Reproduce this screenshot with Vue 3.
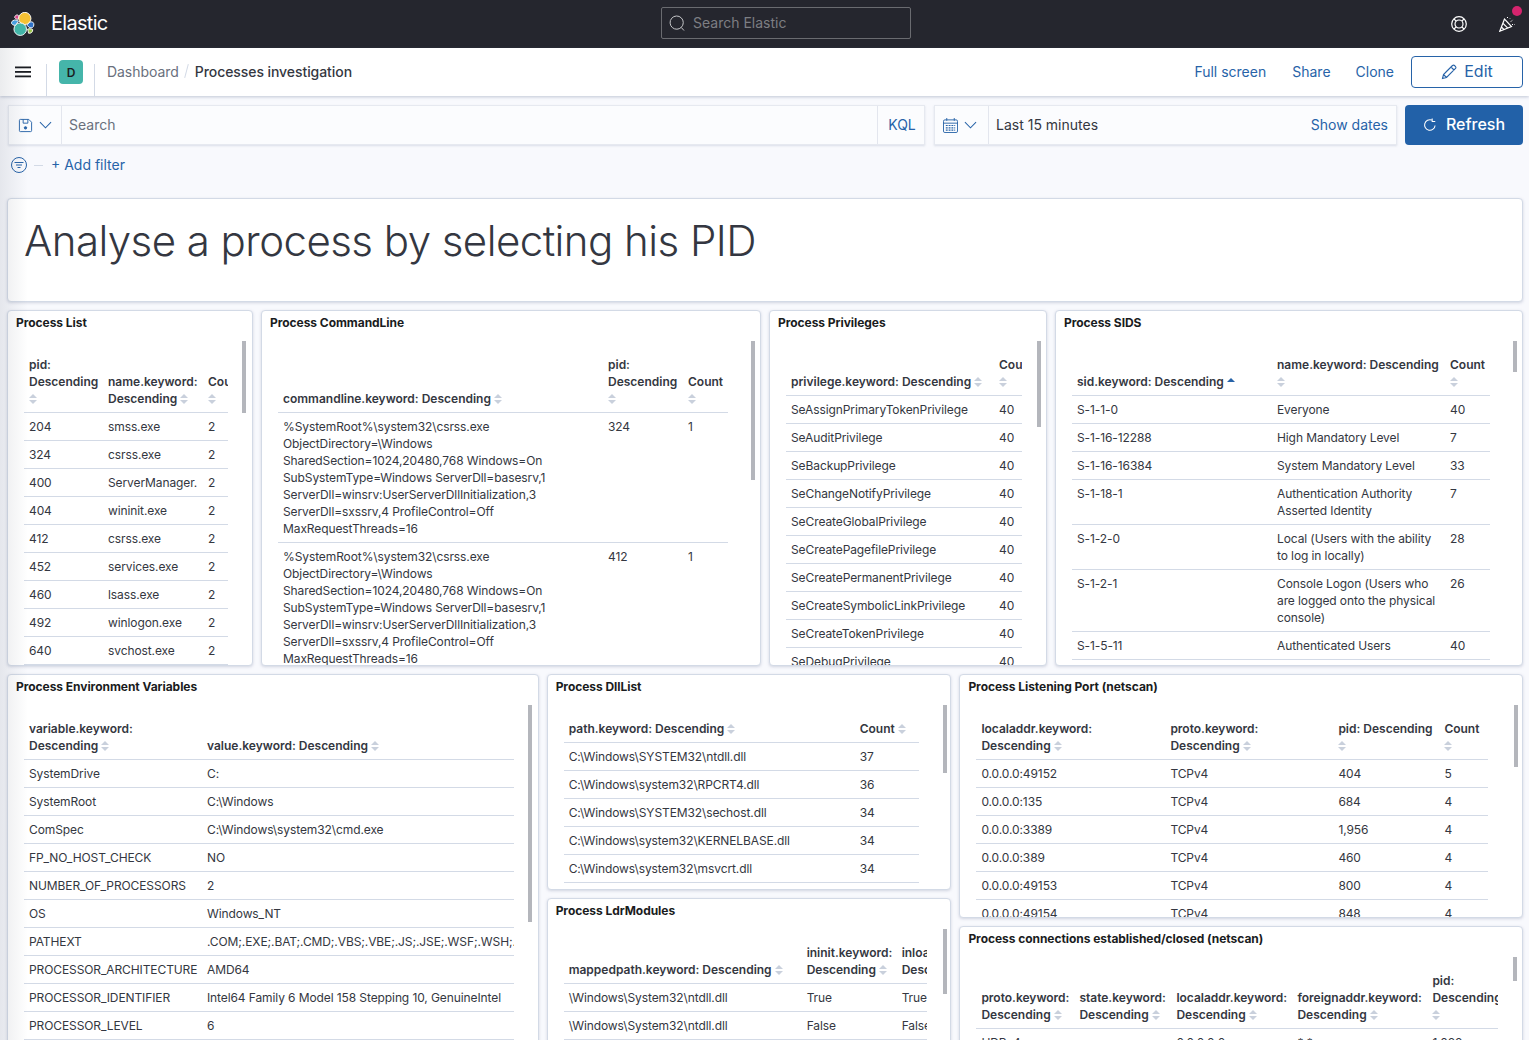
<script setup>
import { ref } from 'vue'

const cmd = '%SystemRoot%\\system32\\csrss.exe\nObjectDirectory=\\Windows\nSharedSection=1024,20480,768 Windows=On\nSubSystemType=Windows ServerDll=basesrv,1\nServerDll=winsrv:UserServerDllInitialization,3\nServerDll=sxssrv,4 ProfileControl=Off\nMaxRequestThreads=16'

const row1 = ref([
  {
    title: 'Process List', width: 246, height: 356, tableWidth: 204, bar: [234, 72],
    cols: [{ w: 79, label: 'pid: Descending' }, { w: 100, label: 'name.keyword: Descending' }, { w: 45, label: 'Count' }],
    rows: [['204', 'smss.exe', '2'], ['324', 'csrss.exe', '2'], ['400', 'ServerManager.', '2'], ['404', 'wininit.exe', '2'], ['412', 'csrss.exe', '2'], ['452', 'services.exe', '2'], ['460', 'lsass.exe', '2'], ['492', 'winlogon.exe', '2'], ['640', 'svchost.exe', '2']]
  },
  {
    title: 'Process CommandLine', width: 500, height: 356, tableWidth: 450, bar: [489, 139],
    cols: [{ w: 325, label: 'commandline.keyword: Descending' }, { w: 80, label: 'pid: Descending' }, { w: 45, label: 'Count' }],
    rows: [[cmd, '324', '1'], [cmd, '412', '1']]
  },
  {
    title: 'Process Privileges', width: 278, height: 356, tableWidth: 236, bar: [267, 86],
    cols: [{ w: 208, label: 'privilege.keyword: Descending' }, { w: 45, label: 'Count' }],
    rows: [['SeAssignPrimaryTokenPrivilege', '40'], ['SeAuditPrivilege', '40'], ['SeBackupPrivilege', '40'], ['SeChangeNotifyPrivilege', '40'], ['SeCreateGlobalPrivilege', '40'], ['SeCreatePagefilePrivilege', '40'], ['SeCreatePermanentPrivilege', '40'], ['SeCreateSymbolicLinkPrivilege', '40'], ['SeCreateTokenPrivilege', '40'], ['SeDebugPrivilege', '40']]
  },
  {
    title: 'Process SIDS', width: 468, height: 356, tableWidth: 418, bar: [457, 31],
    cols: [{ w: 200, label: 'sid.keyword: Descending', active: true }, { w: 173, label: 'name.keyword: Descending' }, { w: 45, label: 'Count' }],
    rows: [['S-1-1-0', 'Everyone', '40'], ['S-1-16-12288', 'High Mandatory Level', '7'], ['S-1-16-16384', 'System Mandatory Level', '33'], ['S-1-18-1', 'Authentication Authority Asserted Identity', '7'], ['S-1-2-0', 'Local (Users with the ability to log in locally)', '28'], ['S-1-2-1', 'Console Logon (Users who are logged onto the physical console)', '26'], ['S-1-5-11', 'Authenticated Users', '40']]
  }
])

const row2 = ref([
  {
    width: 532,
    panels: [{
      title: 'Process Environment Variables', height: 380, tableWidth: 490, bar: [520, 217], nowrap: true,
      cols: [{ w: 178, label: 'variable.keyword: Descending' }, { w: 312, label: 'value.keyword: Descending' }],
      rows: [['SystemDrive', 'C:'], ['SystemRoot', 'C:\\Windows'], ['ComSpec', 'C:\\Windows\\system32\\cmd.exe'], ['FP_NO_HOST_CHECK', 'NO'], ['NUMBER_OF_PROCESSORS', '2'], ['OS', 'Windows_NT'], ['PATHEXT', '.COM;.EXE;.BAT;.CMD;.VBS;.VBE;.JS;.JSE;.WSF;.WSH;.MSC'], ['PROCESSOR_ARCHITECTURE', 'AMD64'], ['PROCESSOR_IDENTIFIER', 'Intel64 Family 6 Model 158 Stepping 10, GenuineIntel'], ['PROCESSOR_LEVEL', '6']]
    }]
  },
  {
    width: 405,
    panels: [
      {
        title: 'Process DllList', height: 216, tableWidth: 355, bar: [395, 68],
        cols: [{ w: 291, label: 'path.keyword: Descending' }, { w: 64, label: 'Count' }],
        rows: [['C:\\Windows\\SYSTEM32\\ntdll.dll', '37'], ['C:\\Windows\\system32\\RPCRT4.dll', '36'], ['C:\\Windows\\SYSTEM32\\sechost.dll', '34'], ['C:\\Windows\\system32\\KERNELBASE.dll', '34'], ['C:\\Windows\\system32\\msvcrt.dll', '34']]
      },
      {
        title: 'Process LdrModules', height: 160, tableWidth: 363, bar: [395, 65],
        cols: [{ w: 238, label: 'mappedpath.keyword: Descending' }, { w: 95, label: 'ininit.keyword: Descending' }, { w: 95, label: 'inload.keyword: Descending' }],
        rows: [['\\Windows\\System32\\ntdll.dll', 'True', 'True'], ['\\Windows\\System32\\ntdll.dll', 'False', 'False']]
      }
    ]
  },
  {
    width: 564,
    panels: [
      {
        title: 'Process Listening Port (netscan)', height: 244, tableWidth: 512, bar: [554, 62],
        cols: [{ w: 189, label: 'localaddr.keyword: Descending' }, { w: 168, label: 'proto.keyword: Descending' }, { w: 106, label: 'pid: Descending' }, { w: 49, label: 'Count' }],
        rows: [['0.0.0.0:49152', 'TCPv4', '404', '5'], ['0.0.0.0:135', 'TCPv4', '684', '4'], ['0.0.0.0:3389', 'TCPv4', '1,956', '4'], ['0.0.0.0:389', 'TCPv4', '460', '4'], ['0.0.0.0:49153', 'TCPv4', '800', '4'], ['0.0.0.0:49154', 'TCPv4', '848', '4']]
      },
      {
        title: 'Process connections established/closed (netscan)', height: 130, tableWidth: 522, bar: [553, 24],
        cols: [{ w: 98, label: 'proto.keyword: Descending' }, { w: 97, label: 'state.keyword: Descending' }, { w: 121, label: 'localaddr.keyword: Descending' }, { w: 135, label: 'foreignaddr.keyword: Descending' }, { w: 80, label: 'pid: Descending' }],
        rows: [['UDPv4', '', '0.0.0.0:0', '*:*', '1,088']]
      }
    ]
  }
])
</script>

<template>
  <div class="page">
    <header class="topbar">
      <div class="brand">
        <svg class="logo" viewBox="0 0 26 26" width="24" height="24">
          <path d="M2 9.500c2-1.500 4.500-1 6 .5-1 1.500-2.500 3-3 4.500-2.500 0-4.500-1-4.500-2.800 0-1 .6-1.700 1.500-2.200z" fill="#4a9fe0" stroke="#fff" stroke-width="1" />
          <path d="M4 6c0-1.700 1.500-3 3-2.800 1 .2 1.500 1 1.500 2 0 1-.3 1.800-.7 2.600C6.500 8 5 7.500 4 6z" fill="#d8488c" stroke="#fff" stroke-width="1" />
          <path d="M17.500 14.500c1-3 4-4.500 6-3.500 2 1.200 1.500 5-.5 6-1.500.7-3.500 0-5.500-2.500z" fill="#2f72c9" stroke="#fff" stroke-width="1" />
          <path d="M18 18.500c1.500-.5 4-.4 5.500.5.200 2.500-1.500 4.500-4.500 4-.2-1.500-.5-3-1-4.500z" fill="#9bc44c" stroke="#fff" stroke-width="1" />
          <circle cx="15" cy="7" r="6.600" fill="#f6c133" stroke="#fff" stroke-width="1" />
          <circle cx="10" cy="18.600" r="6.800" fill="#43b5a8" stroke="#fff" stroke-width="1" />
        </svg>
        <span class="brand-name">Elastic</span>
      </div>
      <div class="global-search">
        <svg viewBox="0 0 16 16" width="16" height="16" fill="none" stroke="#c5c6c9" stroke-width="1">
          <path d="M12.200 12.400A6.600 6.600 0 1 0 3.500 12.700a6.600 6.600 0 0 0 8.700-.3l2.800 3.100" />
        </svg>
        <span class="lift">Search Elastic</span>
      </div>
      <div class="top-icons">
        <svg viewBox="0 0 16 16" width="16" height="16" fill="none" stroke="#fff" stroke-width="1.200">
          <circle cx="8" cy="8" r="7.300" />
          <circle cx="8" cy="8" r="4" />
          <path d="M3 3l2.200 2.200M13 3l-2.200 2.200M3 13l2.200-2.200M13 13l-2.200-2.200" />
        </svg>
        <span class="party">
          <svg viewBox="0 0 16 16" width="16" height="16" fill="none" stroke="#fff" stroke-width="1.200">
            <path d="M5.500 3L.8 15.200 12.500 10.500zM3.800 7.200l5 5M2.400 11l2.700 2.700" />
            <path d="M8.500 1v2M11.500 6l2.500-2.500M13 8.500h2.500M11 2.500l.5-.5" stroke-dasharray="1 1" stroke-width="1" />
          </svg>
          <i class="dot"></i>
        </span>
      </div>
    </header>

    <nav class="subnav">
      <div class="menu-btn">
        <svg viewBox="0 0 16 12" width="16" height="12" fill="#1a1c21">
          <rect y="0.500" width="16" height="1.800" /><rect y="5" width="16" height="1.800" /><rect y="9.500" width="16" height="1.800" />
        </svg>
      </div>
      <div class="avatar-cell"><span class="avatar">D</span></div>
      <div class="crumbs lift">
        <span class="crumb">Dashboard</span><span class="slash"></span><span class="crumb current">Processes investigation</span>
      </div>
      <div class="actions">
        <a class="lift">Full screen</a>
        <a class="lift">Share</a>
        <a class="lift">Clone</a>
        <button class="edit">
          <svg viewBox="0 0 16 16" width="16" height="16" fill="none" stroke="#2763a8" stroke-width="1.100">
            <path d="M1.500 14.500l1-4L11.500 1.500c.8-.6 1.500-.5 2 0l1 1c.5.6.6 1.300 0 2l-9 9zM2.500 10.500l3 3M10 3l3 3M4 9l7.500-7.500" />
          </svg>
          <span class="lift">Edit</span>
        </button>
      </div>
    </nav>

    <div class="querybar">
      <div class="box query-box">
        <div class="box-btn save-btn">
          <svg viewBox="0 0 16 16" width="15" height="15" fill="none" stroke="#2763a8" stroke-width="1">
            <path d="M2.500 1.500h9l3 3v9a1 1 0 0 1-1 1h-11a1 1 0 0 1-1-1v-11a1 1 0 0 1 1-1zM5.500 1.500v4h5v-4" />
            <circle cx="8" cy="10.500" r="1.300" fill="#2763a8" />
          </svg>
          <svg viewBox="0 0 14 8" width="13" height="8" fill="none" stroke="#2763a8" stroke-width="1.100"><path d="M1 1l6 6 6-6" /></svg>
        </div>
        <div class="box-text search-text lift">Search</div>
        <div class="kql lift">KQL</div>
      </div>
      <div class="box date-box">
        <div class="box-btn cal-btn">
          <svg viewBox="0 0 16 16" width="15" height="15" fill="none" stroke="#2763a8" stroke-width="1">
            <rect x="0.500" y="2" width="15" height="13.500" rx="1.500" />
            <path d="M4 0v3M12 0v3M.5 5.500h15" />
            <path d="M3 8h10M3 10.500h10M3 13h10" stroke-dasharray="2 1" stroke-width="1.300" />
          </svg>
          <svg viewBox="0 0 14 8" width="13" height="8" fill="none" stroke="#2763a8" stroke-width="1.100"><path d="M1 1l6 6 6-6" /></svg>
        </div>
        <div class="box-text date-text lift">Last 15 minutes</div>
        <a class="show-dates lift">Show dates</a>
      </div>
      <button class="refresh">
        <svg viewBox="0 0 16 16" width="14" height="14" fill="none" stroke="#fff" stroke-width="1.200">
          <path d="M13.800 8.500A6 6 0 1 1 10 2.400M10.500 .5v3.500H14" />
        </svg>
        <span class="lift">Refresh</span>
      </button>
    </div>

    <div class="filterbar">
      <svg viewBox="0 0 16 16" width="16" height="16" fill="none" stroke="#2763a8" stroke-width="1">
        <circle cx="8" cy="8" r="7.500" />
        <path d="M3.500 5.500h9M5 8h6M6.500 10.500h3" />
      </svg>
      <span class="dash"></span>
      <a class="add-filter lift">+ Add filter</a>
    </div>

    <main class="dashboard">
      <section class="card heading-card">
        <h1>Analyse a process by selecting his PID</h1>
      </section>

      <div class="row">
        <section v-for="p in row1" :key="p.title" class="card panel" :style="{ width: p.width + 'px', height: p.height + 'px' }">
          <h2>{{ p.title }}</h2>
          <span class="scrollbar" :style="{ left: p.bar[0] + 'px', height: p.bar[1] + 'px' }"></span>
          <div class="table-wrap" :style="{ width: p.tableWidth + 'px' }">
            <table :style="{ width: p.cols.reduce((s, c) => s + c.w, 0) + 'px' }">
              <colgroup><col v-for="c in p.cols" :key="c.label" :style="{ width: c.w + 'px' }"></colgroup>
              <thead>
                <tr>
                  <th v-for="c in p.cols" :key="c.label">{{ c.label }} <svg class="sort" viewBox="0 0 8 10" width="8" height="10"><path v-if="c.active" d="M0 5l4-4 4 4z" fill="#2763a8" /><path v-else d="M0 4l4-4 4 4zM0 6l4 4 4-4z" fill="#c9d0dc" /></svg></th>
                </tr>
              </thead>
              <tbody>
                <tr v-for="(r, i) in p.rows" :key="i">
                  <td v-for="(v, j) in r" :key="j">{{ v }}</td>
                </tr>
              </tbody>
            </table>
          </div>
        </section>
      </div>

      <div class="row">
        <div v-for="col in row2" :key="col.width" class="stack" :style="{ width: col.width + 'px' }">
          <section v-for="p in col.panels" :key="p.title" class="card panel" :style="{ height: p.height + 'px' }">
            <h2>{{ p.title }}</h2>
            <span class="scrollbar" :style="{ left: p.bar[0] + 'px', height: p.bar[1] + 'px' }"></span>
            <div class="table-wrap" :style="{ width: p.tableWidth + 'px' }">
              <table :class="{ nowrap: p.nowrap }" :style="{ width: p.cols.reduce((s, c) => s + c.w, 0) + 'px' }">
                <colgroup><col v-for="c in p.cols" :key="c.label" :style="{ width: c.w + 'px' }"></colgroup>
                <thead>
                  <tr>
                    <th v-for="c in p.cols" :key="c.label">{{ c.label }} <svg class="sort" viewBox="0 0 8 10" width="8" height="10"><path d="M0 4l4-4 4 4zM0 6l4 4 4-4z" fill="#c9d0dc" /></svg></th>
                  </tr>
                </thead>
                <tbody>
                  <tr v-for="(r, i) in p.rows" :key="i">
                    <td v-for="(v, j) in r" :key="j">{{ v }}</td>
                  </tr>
                </tbody>
              </table>
            </div>
          </section>
        </div>
      </div>
    </main>

    <div class="edge-shade"></div>
  </div>
</template>

<style>
html, body { margin: 0; overflow: hidden; background: #f8f9fd; }
</style>

<style scoped>
.page {
  position: relative;
  height: 1040px;
  overflow: hidden;
  background: #f8f9fd;
  font-family: Inter, "Liberation Sans", sans-serif;
  color: #343741;
  font-size: 14px;
}
.lift { padding-bottom: 2px; }

.topbar {
  height: 48px;
  background: #25262e;
  display: flex;
  align-items: center;
  position: relative;
}
.brand { display: flex; align-items: center; padding-left: 11px; }
.brand-name {
  color: #fff;
  font-size: 20px;
  margin: 0 0 2px 16px;
  letter-spacing: -0.7px;
}
.global-search {
  position: absolute;
  left: 661px;
  top: 7px;
  width: 250px;
  height: 32px;
  box-sizing: border-box;
  border: 1px solid #6a6b70;
  border-radius: 2px;
  display: flex;
  align-items: center;
  padding-left: 7px;
  gap: 8px;
  color: #7d7e83;
}
.top-icons { margin-left: auto; display: flex; align-items: center; gap: 32px; padding-right: 14px; }
.party { position: relative; display: block; height: 16px; }
.dot {
  position: absolute;
  right: -7px;
  top: -10px;
  width: 10px;
  height: 10px;
  border-radius: 50%;
  background: #d6246e;
}

.subnav {
  height: 48px;
  background: #fff;
  display: flex;
  box-shadow: 0 1px 3px rgba(90, 105, 140, 0.35);
  position: relative;
}
.menu-btn { width: 46px; display: flex; align-items: center; justify-content: center; }
.avatar-cell {
  width: 47px;
  margin-top: 16px;
  border-left: 1px solid #d3dae6;
  border-right: 1px solid #d3dae6;
  position: relative;
}
.avatar {
  position: absolute;
  left: 12px;
  top: -4px;
  width: 24px;
  height: 24px;
  border-radius: 4px;
  background: #45b5aa;
  color: #1a1c21;
  font-size: 12px;
  font-weight: 600;
  display: flex;
  align-items: center;
  justify-content: center;
}
.crumbs { display: flex; align-items: center; margin-left: 12px; }
.crumb { color: #69707d; letter-spacing: -0.05px; }
.crumb.current { color: #343741; font-weight: 500; letter-spacing: -0.07px; }
.slash {
  width: 1px;
  height: 14px;
  margin: 0 8px 0 7px;
  background: #d3dae6;
  transform: rotate(15deg);
}
.actions { margin-left: auto; display: flex; align-items: center; padding-right: 6px; }
.actions a { color: #2763a8; margin-right: 25px; }
.actions a:first-child { margin-right: 26px; }
.edit {
  width: 112px;
  height: 32px;
  margin-left: -8px;
  background: #fff;
  border: 1px solid #2763a8;
  border-radius: 4px;
  color: #2763a8;
  font: 16px Inter, sans-serif;
  display: flex;
  align-items: center;
  justify-content: center;
  gap: 7px;
}

.querybar { display: flex; padding: 9px 6px 0 8px; height: 40px; }
.box {
  background: #fbfcfe;
  border: 1px solid #e6e9f0;
  box-shadow: 0 1px 2px rgba(90, 105, 140, 0.18);
  box-sizing: border-box;
  display: flex;
  align-items: center;
  height: 40px;
  flex: none;
}
.query-box { width: 917px; }
.date-box { width: 463px; margin-left: 9px; }
.box-btn {
  height: 100%;
  display: flex;
  align-items: center;
  gap: 6px;
  border-right: 1px solid #e3e6ee;
  box-sizing: border-box;
  padding-left: 9px;
}
.save-btn { width: 53px; }
.cal-btn { width: 54px; padding-left: 8px; }
.box-text { padding-left: 7px; flex: 1; }
.search-text { color: #69707d; }
.date-text { color: #343741; }
.kql {
  height: 100%;
  width: 47px;
  box-sizing: border-box;
  border-left: 1px solid #e3e6ee;
  padding-left: 2px;
  color: #2763a8;
  display: flex;
  align-items: center;
  justify-content: center;
}
.show-dates { color: #2763a8; padding-right: 8px; }
.refresh {
  width: 118px;
  height: 40px;
  margin-left: 8px;
  flex: none;
  background: #2261a8;
  border: 0;
  border-radius: 4px;
  color: #fff;
  font: 500 16px Inter, sans-serif;
  display: flex;
  align-items: center;
  justify-content: center;
  gap: 9px;
}

.filterbar { display: flex; align-items: center; height: 24px; margin-top: 8px; padding-left: 11px; }
.dash { width: 9px; height: 1px; background: #d3dae6; margin: 0 8px 0 7px; }
.add-filter { color: #2763a8; }

.dashboard { padding: 21px 6px 0 7px; display: flex; flex-direction: column; gap: 8px; }
.row { display: flex; gap: 8px; }
.stack { display: flex; flex-direction: column; gap: 8px; }

.card {
  background: #fff;
  border: 1px solid #d3dae6;
  border-radius: 4px;
  box-sizing: border-box;
  box-shadow: 0 1px 3px rgba(90, 105, 140, 0.25);
}
.heading-card { height: 104px; padding: 15px 16px; }
h1 {
  margin: 0;
  font-size: 42px;
  line-height: 54px;
  font-weight: 300;
  letter-spacing: -0.55px;
  color: #343741;
}

.panel { position: relative; overflow: hidden; }
h2 {
  margin: 0;
  padding: 3px 8px 0;
  height: 40px;
  box-sizing: border-box;
  font-size: 12px;
  line-height: 17px;
  font-weight: 700;
  letter-spacing: -0.05px;
  color: #1a1c21;
}
.scrollbar {
  position: absolute;
  top: 30px;
  width: 4px;
  background: #b4b6bc;
}
.table-wrap { overflow: hidden; margin-left: 16px; }
table { table-layout: fixed; border-collapse: collapse; font-size: 12px; line-height: 17px; }
th, td { padding: 5px; border-bottom: 1px solid #d3dae6; text-align: left; overflow: hidden; }
th { vertical-align: bottom; font-weight: 600; color: #343741; }
td { vertical-align: top; white-space: pre-line; color: #343741; letter-spacing: -0.1px; }
.nowrap td { white-space: nowrap; }
.sort { vertical-align: -1px; }

.edge-shade {
  position: absolute;
  left: 0;
  top: 48px;
  bottom: 0;
  width: 28px;
  pointer-events: none;
  background: linear-gradient(90deg, rgba(60, 70, 90, 0.1), rgba(60, 70, 90, 0));
}
</style>
